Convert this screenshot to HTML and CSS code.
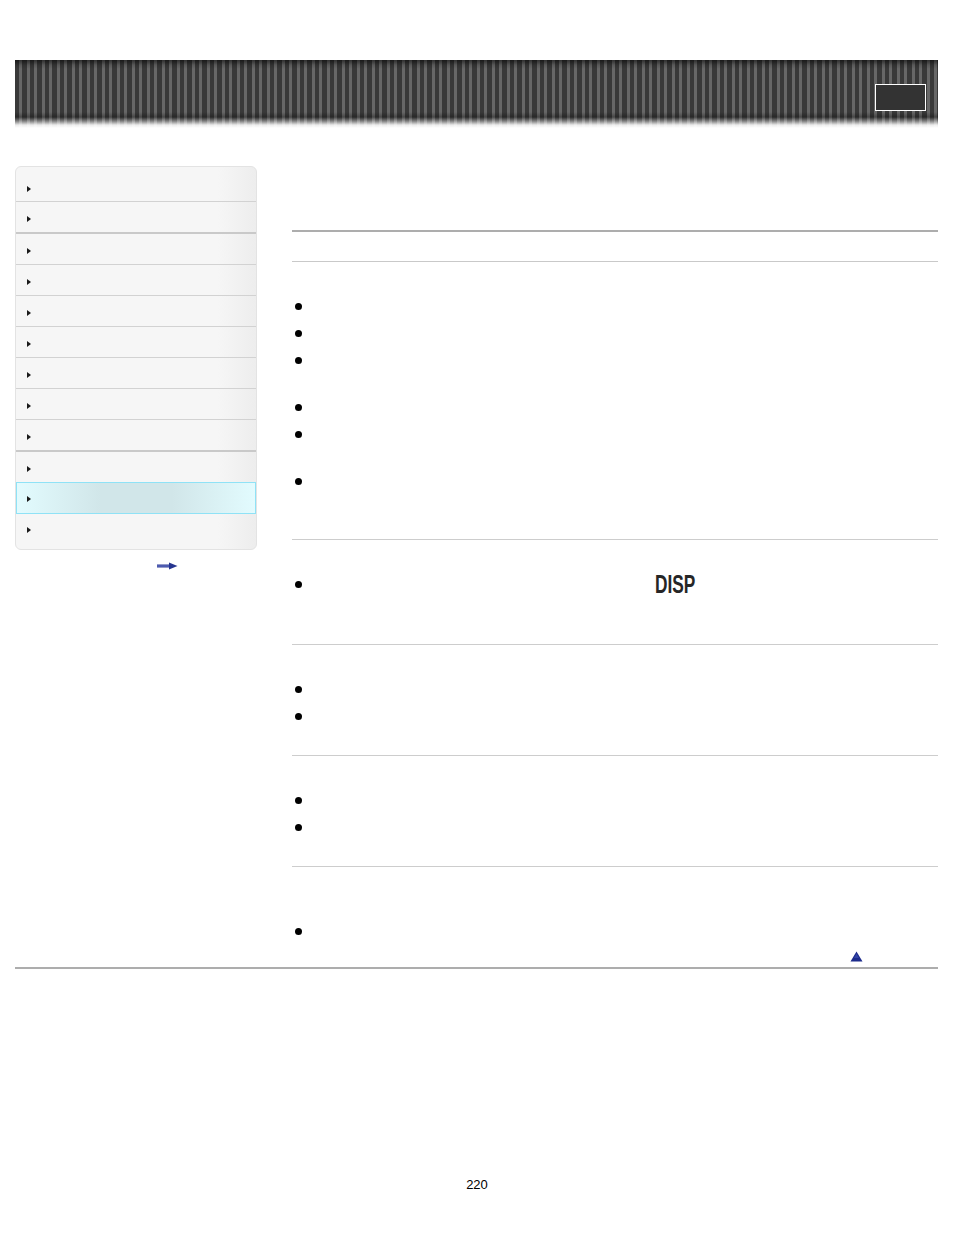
FILE: index.html
```html
<!DOCTYPE html>
<html lang="en">
  <head>
    <meta charset="UTF-8" />
    <meta name="viewport" content="width=device-width, initial-scale=1.0" />
    <title>Help Guide</title>
    <link rel="stylesheet" href="styles.css">
  </head>
  <body>
    <div class="header">
      <div class="header-box"></div>
    </div>

    <div class="page">
      <div class="side">
        <ul class="menu">
          <li class="first"><span class="tri"></span></li>
          <li class="group-end"><span class="tri"></span></li>
          <li><span class="tri"></span></li>
          <li><span class="tri"></span></li>
          <li><span class="tri"></span></li>
          <li><span class="tri"></span></li>
          <li><span class="tri"></span></li>
          <li><span class="tri"></span></li>
          <li class="group-end"><span class="tri"></span></li>
          <li class="no-line"><span class="tri"></span></li>
          <li class="active"><span class="tri"></span></li>
          <li class="last"><span class="tri"></span></li>
        </ul>
        <div class="more">
          <svg width="21" height="8" viewBox="0 0 21 8">
            <rect x="0" y="2.5" width="13" height="3" fill="#2c3a98" />
            <rect x="0" y="3.5" width="13" height="1" fill="#6f7cc8" />
            <polygon points="12,0.5 20.5,4 12,7.5" fill="#26358f" />
          </svg>
        </div>
      </div>

      <div class="main">
        <div class="page-title"></div>
        <div class="subtitle"></div>

        <div class="section first-section">
          <ul class="bullets">
            <li><span>&nbsp;</span></li>
            <li><span>&nbsp;</span></li>
            <li><span>&nbsp;<br />&nbsp;</span></li>
            <li><span>&nbsp;</span></li>
            <li><span>&nbsp;<br />&nbsp;</span></li>
            <li><span>&nbsp;<br />&nbsp;</span></li>
          </ul>
        </div>

        <div class="section disp-section">
          <ul class="bullets">
            <li><span><span class="disp">DISP</span><br />&nbsp;</span></li>
          </ul>
        </div>

        <div class="section">
          <ul class="bullets">
            <li><span>&nbsp;</span></li>
            <li><span>&nbsp;</span></li>
          </ul>
        </div>

        <div class="section">
          <ul class="bullets">
            <li><span>&nbsp;</span></li>
            <li><span>&nbsp;</span></li>
          </ul>
        </div>

        <div class="section last-section">
          <ul class="bullets">
            <li><span>&nbsp;</span></li>
          </ul>
          <div class="to-top">
            <svg width="13" height="11" viewBox="0 0 13 11">
              <polygon points="6.5,0.5 12.5,10.5 0.5,10.5" fill="#1d2b8c" />
              <polygon points="6.5,2.5 9,7 4,7" fill="#3344a6" />
            </svg>
          </div>
        </div>
      </div>
    </div>

    <div class="page-number">220</div>
  </body>
</html>
```

FILE: styles.css
```css
body {
  font-family: "Liberation Sans", Arial, sans-serif;
  margin: 0;
  padding: 0;
  background-color: #fff;
  color: #000;
  font-size: 13px;
}
.header {
  margin: 60px 0 0 15px;
  width: 923px;
  height: 68px;
  display: flex;
  justify-content: flex-end;
  align-items: flex-start;
  background:
    linear-gradient(
      to bottom,
      rgba(0, 0, 0, 0.55) 0,
      rgba(0, 0, 0, 0.15) 5px,
      rgba(0, 0, 0, 0) 9px,
      rgba(0, 0, 0, 0) 52px,
      rgba(0, 0, 0, 0.3) 57px,
      rgba(255, 255, 255, 0.35) 61px,
      rgba(255, 255, 255, 0.9) 65px,
      #fff 68px
    ),
    repeating-linear-gradient(
      to right,
      #393939 0,
      #393939 4.5px,
      #676767 4.5px,
      #676767 7.5px
    );
}
.header-box {
  margin: 24px 12px 0 0;
  width: 49px;
  height: 25px;
  border: 1px solid #fff;
  background-color: #333;
}
.page {
  display: flex;
  align-items: flex-start;
  gap: 35px;
  margin: 38px 0 0 15px;
  width: 923px;
  border-bottom: 2px solid #adadad;
}
.side {
  width: 242px;
  flex-shrink: 0;
}
.menu {
  list-style: none;
  margin: 0;
  padding: 0;
  border: 1px solid #e3e3e3;
  border-radius: 6px;
  overflow: hidden;
  background: linear-gradient(
    to right,
    #f6f6f6 0,
    #f6f6f6 84%,
    #ededed 100%
  );
}
.menu li {
  display: flex;
  align-items: flex-start;
  height: 30px;
  padding-left: 11px;
  border-bottom: 1px solid #d2d2d2;
}
.menu li.first {
  height: 34px;
}
.menu li.group-end {
  border-bottom: 2px solid #c9c9c9;
}
.menu li.no-line {
  border-bottom: none;
}
.menu li.active {
  border: 1px solid #8fe2f6;
  padding-left: 10px;
  background: linear-gradient(
    to right,
    #e2fbfe 0,
    #d1e6e9 35%,
    #d1e6e9 65%,
    #e2fbfe 100%
  );
}
.menu li.last {
  height: 35px;
  border-bottom: none;
}
.tri {
  width: 0;
  height: 0;
  margin-top: 14px;
  border-left: 4px solid #1a1a1a;
  border-top: 3px solid transparent;
  border-bottom: 3px solid transparent;
}
.menu li.first .tri {
  margin-top: 19px;
}
.menu li.active .tri {
  margin-top: 13px;
}
.menu li.last .tri {
  margin-top: 13px;
}
.more {
  margin-top: 12px;
  padding-left: 142px;
  height: 8px;
  line-height: 0;
}
.main {
  width: 646px;
}
.page-title {
  height: 64px;
  border-bottom: 2px solid #adadad;
}
.subtitle {
  height: 29px;
  border-bottom: 1px solid #c9c9c9;
}
.section {
  padding: 34px 0 22px;
  border-top: 1px solid #cdcdcd;
}
.first-section {
  border-top: none;
  padding-bottom: 21px;
}
.disp-section {
  padding-bottom: 23px;
}
.last-section {
  padding: 54px 0 0;
}
.bullets {
  list-style: none;
  margin: 0;
  padding: 0;
}
.bullets li {
  display: flex;
  align-items: flex-start;
  line-height: 20px;
  margin-bottom: 7px;
}
.bullets li::before {
  content: "";
  flex-shrink: 0;
  width: 7px;
  height: 7px;
  margin: 7px 14px 0 3px;
  border-radius: 50%;
  background-color: #000;
}
.disp {
  display: inline-block;
  vertical-align: top;
  height: 20px;
  margin-left: 339px;
  font-size: 25px;
  line-height: 20px;
  font-weight: bold;
  color: #262626;
  transform: scaleX(0.69);
  transform-origin: left center;
}
.to-top {
  height: 19px;
  display: flex;
  justify-content: flex-end;
  padding-right: 75px;
  padding-top: 3px;
  box-sizing: border-box;
  line-height: 0;
}
.page-number {
  margin-top: 208px;
  text-align: center;
  font-size: 13px;
  line-height: 15px;
  color: #000;
}
```
